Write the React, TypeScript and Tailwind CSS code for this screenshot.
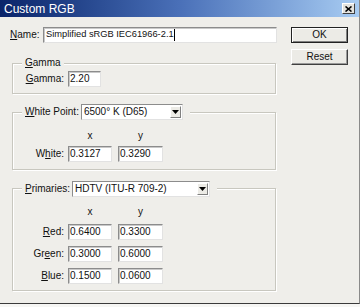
import React from 'react';

const panel = 'bg-[#efeeea]';

function Key({ text, at }: { text: string; at: number }) {
  return (
    <span>
      {text.slice(0, at)}
      <span className="underline underline-offset-[1px]">{text[at]}</span>
      {text.slice(at + 1)}
    </span>
  );
}

function Field({ value, width }: { value: string; width: string }) {
  return (
    <div
      className={`${width} h-[16px] bg-white border border-t-[#8c8c8c] border-l-[#8c8c8c] border-r-[#e2e2e2] border-b-[#e2e2e2] shadow-[inset_1px_1px_0_#c9c9c9] flex items-center pl-[1px] leading-none`}
    >
      {value}
    </div>
  );
}

function Combo({ value, width }: { value: string; width: string }) {
  return (
    <div
      className={`${width} h-[16px] bg-white border border-t-[#8c8c8c] border-l-[#8c8c8c] border-r-[#e2e2e2] border-b-[#e2e2e2] flex items-center justify-between pl-[2px] pr-[1px] leading-none`}
    >
      <span>{value}</span>
      <div className="w-[11px] h-[12px] bg-[#ecebe6] border border-t-white border-l-white border-r-[#808080] border-b-[#808080] flex items-center justify-center">
        <svg width="7" height="6" viewBox="0 0 7 6">
          <path d="M0 1h7L3.5 5z" fill="#000" />
        </svg>
      </div>
    </div>
  );
}

function Group({ legend, children }: { legend: React.ReactNode; children: React.ReactNode }) {
  return (
    <fieldset className="ml-[2px] w-[264px] min-w-0 border border-[#c8c7bf] shadow-[inset_1px_1px_0_#fff,1px_1px_0_#fff]">
      <legend className={`ml-[9px] ${panel}`}>{legend}</legend>
      {children}
    </fieldset>
  );
}

function XYHeader({ className }: { className: string }) {
  return (
    <div className={`flex h-[12px] leading-[12px] ${className}`}>
      <div className="w-[55px]" />
      <div className="w-[44px] text-center">x</div>
      <div className="w-[6px]" />
      <div className="w-[45px] text-center">y</div>
    </div>
  );
}

function XYRow({ label, x, y }: { label: React.ReactNode; x: string; y: string }) {
  return (
    <div className="flex items-center h-[16px]">
      <div className="w-[51px] text-right leading-none">{label}</div>
      <div className="ml-[4px]">
        <Field value={x} width="w-[44px]" />
      </div>
      <div className="ml-[6px]">
        <Field value={y} width="w-[45px]" />
      </div>
    </div>
  );
}

function Button({ label, isDefault }: { label: string; isDefault?: boolean }) {
  return (
    <div
      className={`w-[57px] h-[16px] bg-[#ecebe6] flex items-center justify-center leading-none border ${
        isDefault
          ? 'border-[#222] shadow-[inset_1px_1px_0_#fff,inset_-1px_-1px_0_#808080]'
          : 'border-t-white border-l-white border-r-[#404040] border-b-[#404040] shadow-[inset_-1px_-1px_0_#9a9a9a]'
      }`}
    >
      {label}
    </div>
  );
}

export default function App() {
  return (
    <div className="w-[360px] h-[307px] bg-[#f6f6f4] text-[#111] text-[10px] font-['Liberation_Sans',Arial,sans-serif]">
      <div className={`w-[360px] h-[304px] flex flex-col ${panel} border-r border-b border-r-[#8a8a8a] border-b-[#3a3a3a]`}>
        <div className="h-[17px] shrink-0 flex items-center justify-between pl-[4px] pr-[4px] bg-linear-to-r from-[#0a246a] via-[#4a70b8] to-[#a8ccf2]">
          <span className="text-white text-[12px] leading-none">Custom RGB</span>
          <div className="w-[13px] h-[11px] bg-[#e4e3de] border border-t-white border-l-white border-r-[#404040] border-b-[#404040] flex items-center justify-center">
            <svg width="7" height="6" viewBox="0 0 7 6">
              <path d="M0.5 0.5L6.5 5.5M6.5 0.5L0.5 5.5" stroke="#000" strokeWidth="1.6" />
            </svg>
          </div>
        </div>

        <div className="flex pt-[10px]">
          <div className="w-[277px] pl-[10px] flex flex-col">
            <div className="flex items-center h-[16px]">
              <div className="w-[33px] leading-none">
                <Key text="Name:" at={0} />
              </div>
              <div className="flex-1 h-[16px] bg-white border border-t-[#8c8c8c] border-l-[#8c8c8c] border-r-[#e2e2e2] border-b-[#e2e2e2] shadow-[inset_1px_1px_0_#c9c9c9] flex items-center pl-[2px] leading-none">
                <span className="text-[9.3px]">Simplified sRGB IEC61966-2.1</span>
                <span className="w-px h-[12px] bg-black" />
              </div>
            </div>

            <div className="mt-[14px]">
              <Group
                legend={
                  <span className="block px-[3px] h-[12px] leading-[12px]">
                    <Key text="Gamma" at={0} />
                  </span>
                }
              >
                <div className="flex items-center pt-[2px] pb-[6px]">
                  <div className="w-[51px] text-right leading-none">
                    <Key text="Gamma:" at={0} />
                  </div>
                  <div className="ml-[4px]">
                    <Field value="2.20" width="w-[33px]" />
                  </div>
                </div>
              </Group>
            </div>

            <div className="mt-[10px]">
              <Group
                legend={
                  <div className="flex items-center pl-[3px] pr-[7px] h-[16px]">
                    <span className="leading-none">
                      <Key text="White Point:" at={0} />
                    </span>
                    <div className="ml-[2px]">
                      <Combo value="6500° K (D65)" width="w-[102px]" />
                    </div>
                  </div>
                }
              >
                <XYHeader className="mt-[10px]" />
                <div className="mt-[4px] pb-[7px]">
                  <XYRow label={<Key text="White:" at={1} />} x="0.3127" y="0.3290" />
                </div>
              </Group>
            </div>

            <div className="mt-[10px]">
              <Group
                legend={
                  <div className="flex items-center pl-[3px] pr-[7px] h-[17px]">
                    <span className="leading-none">
                      <Key text="Primaries:" at={0} />
                    </span>
                    <div className="ml-[2px]">
                      <Combo value="HDTV (ITU-R 709-2)" width="w-[138px]" />
                    </div>
                  </div>
                }
              >
                <XYHeader className="mt-[9px]" />
                <div className="mt-[6px] flex flex-col gap-[6px] pb-[6px]">
                  <XYRow label={<Key text="Red:" at={0} />} x="0.6400" y="0.3300" />
                  <XYRow label={<Key text="Green:" at={2} />} x="0.3000" y="0.6000" />
                  <XYRow label={<Key text="Blue:" at={0} />} x="0.1500" y="0.0600" />
                </div>
              </Group>
            </div>
          </div>

          <div className="ml-[14px] flex flex-col gap-[6px]">
            <Button label="OK" isDefault />
            <Button label="Reset" />
          </div>
        </div>
      </div>
    </div>
  );
}
